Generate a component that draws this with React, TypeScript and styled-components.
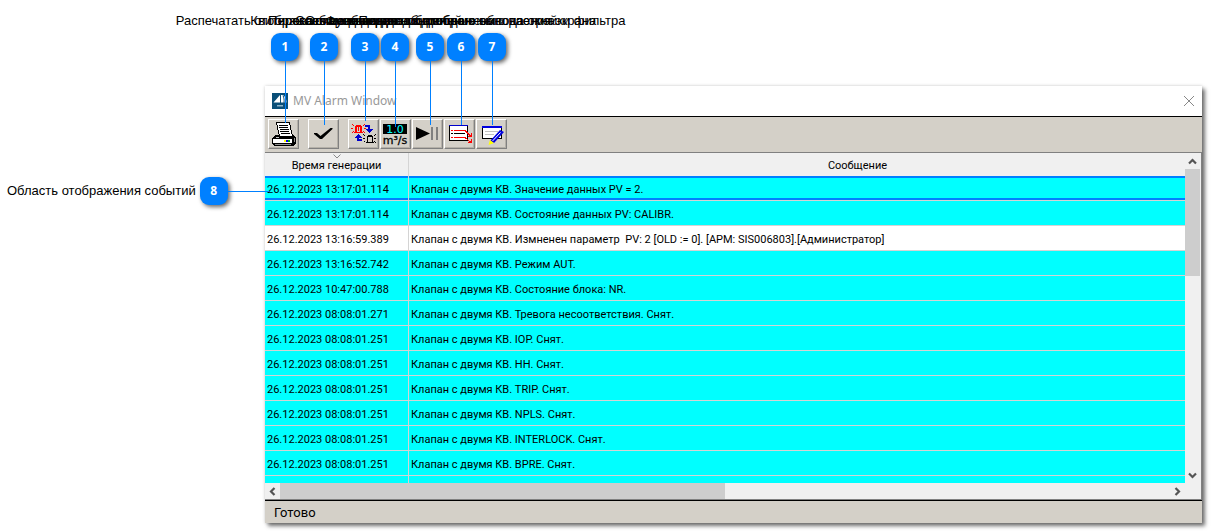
import React from "react";
import styled, { createGlobalStyle, css } from "styled-components";

const UI = `Roboto, "Liberation Sans", sans-serif`;
const CAPTION = `"Noto Sans", "Open Sans", sans-serif`;
const LABEL = `"Liberation Sans", Arial, sans-serif`;
const BLUE = "#0080ff";

const GlobalStyle = createGlobalStyle`
  *, *::before, *::after { box-sizing: border-box; }
  body { margin: 0; background: #fff; color: #000; font-family: ${LABEL}; font-size: 13px; }
  button { margin: 0; padding: 0; font: inherit; color: inherit; }
`;

const Figure = styled.main`
  position: relative;
  padding: 86px 9px 8px 265px;
  overflow: hidden;
`;

const Window = styled.section`
  display: flex;
  flex-direction: column;
  background: #d4d0c8;
  box-shadow: 3px 3px 4px rgba(0, 0, 0, 0.55), 0 0 3px rgba(0, 0, 0, 0.18);
`;

const TitleBar = styled.header`
  display: flex;
  align-items: center;
  gap: 5px;
  height: 31px;
  padding: 0 7px;
  background: #fff;
  border-bottom: 1px solid #000;
`;

const Title = styled.h1`
  flex: 1;
  margin: 0;
  font: 400 12px/16px ${CAPTION};
  color: #999;
`;

const CloseButton = styled.button`
  display: flex;
  border: 0;
  background: none;
`;

const Toolbar = styled.div`
  display: flex;
  gap: 9px;
  height: 36px;
  padding: 2px 3px;
  border-bottom: 1px solid #808080;
`;

const ToolGroup = styled.div`
  display: flex;
  gap: 1px;
`;

const ToolButton = styled.button`
  display: flex;
  width: 31px;
  height: 30px;
  border: 1px solid;
  border-color: #fff #808080 #808080 #fff;
  background: #d4d0c8;
  box-shadow: inset -1px -1px 0 #b4b0a8;
`;

const Icon = styled.svg`
  display: block;
  flex: none;
`;

const Viewer = styled.div`
  display: grid;
  grid-template-columns: minmax(0, 1fr) 15px;
  grid-template-rows: 330px 16px;
  padding-right: 1px;
  background: #f0f0f0;
  border-right: 1px solid #808080;
  border-bottom: 1px solid #808080;
`;

const TableArea = styled.div`
  overflow: hidden;
`;

const Table = styled.table`
  width: calc(100% + 122px);
  table-layout: fixed;
  border-collapse: separate;
  border-spacing: 0;
  font: 400 11px/14px ${UI};
`;

const HeadCell = styled.th<{ $width?: string }>`
  position: relative;
  width: ${(p) => p.$width ?? "auto"};
  height: 23px;
  padding: 2px 0 0;
  font-weight: 400;
  background: #f0f0f0;
  border-right: 1px solid #d4d4d4;
`;

const SortMark = styled(Icon)`
  position: absolute;
  top: 1px;
  left: 50%;
  transform: translateX(-50%);
`;

const Cell = styled.td`
  height: 25px;
  padding: 3px 0 0 2px;
  white-space: pre;
  border-right: 1px solid #d4d4d4;
  border-bottom: 1px solid #d4d4d4;
`;

const Row = styled.tr<{ $plain?: boolean; $selected?: boolean }>`
  background: ${(p) => (p.$plain ? "#fff" : "#00ffff")};
  ${(p) =>
    p.$selected &&
    css`
      ${Cell} {
        box-shadow: inset 0 2px 0 ${BLUE}, inset 0 -2px 0 ${BLUE};
      }
    `}
`;

const ScrollBar = styled.div<{ $vertical?: boolean }>`
  display: flex;
  flex-direction: ${(p) => (p.$vertical ? "column" : "row")};
  background: #f0f0f0;
`;

const ScrollTrack = styled.div<{ $vertical?: boolean }>`
  display: flex;
  flex: 1;
  flex-direction: ${(p) => (p.$vertical ? "column" : "row")};
`;

const ScrollThumb = styled.div<{ $share: string }>`
  flex: 0 0 ${(p) => p.$share};
  background: #cdcdcd;
`;

const ScrollButton = styled.button`
  display: flex;
  align-items: center;
  justify-content: center;
  flex: none;
  width: 15px;
  height: 16px;
  border: 0;
  background: #f0f0f0;
`;

const StatusBar = styled.footer`
  height: 23px;
  padding: 3px 9px;
  border-top: 1px solid #000;
  font: 400 13px/18px ${UI};
`;

const Callout = styled.div<{ $x: number; $y: number; $side?: boolean }>`
  position: absolute;
  left: ${(p) => p.$x}px;
  top: ${(p) => p.$y}px;
  display: flex;
  flex-direction: ${(p) => (p.$side ? "row" : "column")};
  align-items: center;
  width: ${(p) => (p.$side ? "auto" : "28px")};
`;

const CalloutLabel = styled.span`
  flex: none;
  font: 400 13px/16px ${LABEL};
  white-space: nowrap;
`;

const Badge = styled.span<{ $side?: boolean }>`
  display: flex;
  flex: none;
  align-items: center;
  justify-content: center;
  width: 28px;
  height: 28px;
  margin: ${(p) => (p.$side ? "0 0 0 4px" : "4px 0 0")};
  border-radius: 9px;
  background: ${BLUE};
  box-shadow: 2px 2px 4px rgba(0, 0, 0, 0.6);
  color: #fff;
  font: 700 12px/16px ${CAPTION};
`;

const Leader = styled.span<{ $length: number; $side?: boolean }>`
  flex: none;
  width: ${(p) => (p.$side ? p.$length : 1)}px;
  height: ${(p) => (p.$side ? 1 : p.$length)}px;
  background: ${BLUE};
`;

const AppIcon = () => (
  <Icon width="16" height="16" viewBox="0 0 16 16" aria-hidden="true">
    <path fill="#0a4f78" d="M0 0h16v16H0z" />
    <path fill="#fff" d="M1.500 9.500 8 2v7.500zM9 2h2c2 1.500 3.500 4 3.500 7.500H9z" />
    <path d="M11 2.500c1 2 1.300 4.500 1 7.500" stroke="#0a4f78" fill="none" />
    <path fill="#8fb4c8" d="M5 12h6v1.500H5z" />
  </Icon>
);

const PrintIcon = () => (
  <Icon width="29" height="28" viewBox="1 1 29 28" shapeRendering="crispEdges" aria-hidden="true">
    <path d="M8 16h17l3 3v6l-3 2H6l-2-2v-6z" fill="#000" />
    <path d="M8.500 3.500h13l3 14h-13z" fill="#fff" stroke="#000" />
    <path d="M11 6.500h9M11 8.500h9M12 10.500h9M12 12.500h9M13 14.500h9" stroke="#000" />
    <path d="M5 20h19v4H5z" fill="#fff" />
    <path d="M8 18h3v1H7z" fill="#c0c0c0" />
    <path d="M26 19h1v4h-1zM7 25h16v1H7z" fill="#909090" />
    <path d="M16 21h2v2h-2z" fill="#ff0" />
    <path d="M18 21h2v2h-2z" fill="#00f" />
    <path d="M20 21h2v2h-2z" fill="#0a0" />
  </Icon>
);

const AcknowledgeIcon = () => (
  <Icon width="29" height="28" viewBox="1 1 29 28" aria-hidden="true">
    <path d="M6 14h3l3.500 3L22.500 9h2v1L14 20h-2l-6-5z" fill="#000" />
  </Icon>
);

const SwitchIcon = () => (
  <Icon width="29" height="28" viewBox="1 1 29 28" shapeRendering="crispEdges" fill="none" aria-hidden="true">
    <path d="M7 7h1V6h5v1h1v6h1v1H6v-1h1z" fill="#f00" />
    <path d="M9 8h3v5H9z" fill="#d4d0c8" />
    <path d="M10 8h1v4h-1z" fill="#f00" />
    <path d="M4 5h1v1H4zM5 6h1v1H5zM3 9h2v1H3zM5 12h1v1H5zM4 13h1v1H4zM16 5h1v1h-1zM15 6h1v1h-1zM16 9h2v1h-2zM15 12h1v1h-1zM16 13h1v1h-1z" fill="#f00" />
    <path d="M17 6h5v4h3l-4 4-4-4h3V8h-3z" fill="#00c" />
    <path d="M14 22H9v-3H6l4-4 4 4h-3v1h3z" fill="#00c" />
    <path d="M19 17h1v-1h4v1h1v6h1v1h-8v-1h1z" fill="#000" />
    <path d="M20 18h4v5h-4z" fill="#d4d0c8" />
    <path d="M15 15h1v1h-1zM16 16h1v1h-1zM15 19h2v1h-2zM16 22h1v1h-1zM27 15h1v1h-1zM26 16h1v1h-1zM26 19h2v1h-2zM26 22h1v1h-1zM27 23h1v1h-1z" fill="#000" />
  </Icon>
);

const UnitsIcon = () => (
  <Icon width="29" height="28" viewBox="1 1 29 28" aria-hidden="true">
    <path d="M3 5h24v10H3z" fill="#000" />
    <text x="15" y="14" textAnchor="middle" fill="#0ff" fontFamily="DejaVu Sans, sans-serif" fontSize="11">1.0</text>
    <text x="15" y="25" textAnchor="middle" fill="#000" stroke="#000" strokeWidth="0.3" fontFamily="DejaVu Sans, sans-serif" fontSize="11">m³/s</text>
  </Icon>
);

const PauseIcon = () => (
  <Icon width="29" height="28" viewBox="1 1 29 28" aria-hidden="true">
    <path d="M4 8l14 6.500L4 21z" fill="#000" />
    <path d="M19 8h2v13h-2zM24 8h2v13h-2z" fill="#808080" />
  </Icon>
);

const DetailIcon = () => (
  <Icon width="29" height="28" viewBox="1 1 29 28" shapeRendering="crispEdges" fill="none" aria-hidden="true">
    <path d="M5.500 6.500h18v15h-18z" fill="#fff" stroke="#000" />
    <path d="M5 6h19v1H5z" fill="#00c" />
    <path d="M7 11h2v1H7zM10 11h11v1H10zM7 18h2v1H7zM10 18h11v1H10z" fill="#f00" />
    <path d="M21 11.500l6 6M21 18.500l6 5" stroke="#f00" />
    <path d="M27 14h1v4h-4v-1h3zM27 20h1v4h-4v-1h3z" fill="#f00" />
    <path d="M7 14h2v1H7zM10 14h11v1H10z" fill="#000" />
  </Icon>
);

const FilterIcon = () => (
  <Icon width="29" height="28" viewBox="1 1 29 28" aria-hidden="true">
    <path d="M6.500 8.500h19v11h-19z" fill="#fff" stroke="#000" shapeRendering="crispEdges" />
    <path d="M6 8h20" stroke="#0000e0" strokeWidth="2" shapeRendering="crispEdges" />
    <path d="M9 12.500h13M9 15.500h9" stroke="#c0c0c0" shapeRendering="crispEdges" />
    <path d="M24 11l4 2-10 11-4-2z" fill="#0000e0" />
    <path d="M24.500 13.500l-8 8.500" stroke="#fff" />
    <path d="M14 21l4 3-5.500 2z" fill="#ff0" />
  </Icon>
);

const arrows = {
  up: "M1 6.500 4.500 3 8 6.500",
  down: "M1 2.500 4.500 6 8 2.500",
  left: "M6.500 1 3 4.500 6.500 8",
  right: "M2.500 1 6 4.500 2.500 8",
};

const Arrow = ({ to }: { to: keyof typeof arrows }) => (
  <Icon width="9" height="9" viewBox="0 0 9 9" fill="none" aria-hidden="true">
    <path d={arrows[to]} stroke="#555" strokeWidth="2.200" />
  </Icon>
);

const toolGroups = [
  [{ name: "Печать", icon: <PrintIcon /> }],
  [{ name: "Квитировать", icon: <AcknowledgeIcon /> }],
  [
    { name: "Переключение", icon: <SwitchIcon /> },
    { name: "Единицы", icon: <UnitsIcon /> },
    { name: "Пауза", icon: <PauseIcon /> },
    { name: "Подробно", icon: <DetailIcon /> },
    { name: "Фильтр", icon: <FilterIcon /> },
  ],
];

const events = [
  { time: "26.12.2023 13:17:01.114", text: "Значение данных PV = 2.", selected: true },
  { time: "26.12.2023 13:17:01.114", text: "Состояние данных PV: CALIBR." },
  {
    time: "26.12.2023 13:16:59.389",
    text: "Измненен параметр  PV: 2 [OLD := 0]. [АРМ: SIS006803].[Администратор]",
    plain: true,
  },
  { time: "26.12.2023 13:16:52.742", text: "Режим AUT." },
  { time: "26.12.2023 10:47:00.788", text: "Состояние блока: NR." },
  { time: "26.12.2023 08:08:01.271", text: "Тревога несоответствия. Снят." },
  { time: "26.12.2023 08:08:01.251", text: "IOP. Снят." },
  { time: "26.12.2023 08:08:01.251", text: "HH. Снят." },
  { time: "26.12.2023 08:08:01.251", text: "TRIP. Снят." },
  { time: "26.12.2023 08:08:01.251", text: "NPLS. Снят." },
  { time: "26.12.2023 08:08:01.251", text: "INTERLOCK. Снят." },
  { time: "26.12.2023 08:08:01.251", text: "BPRE. Снят." },
];

const callouts = [
  { x: 271, length: 62, label: "Распечатать отображаемые данные" },
  { x: 310, length: 64, label: "Квитировать сообщения" },
  { x: 351, length: 60, label: "Переключение вида сообщений" },
  { x: 381, length: 66, label: "Сообщения с единицами данных" },
  { x: 416, length: 64, label: "Остановка и возобновление вывода окна" },
  { x: 447, length: 64, label: "Функция для подробного обновления экрана" },
  { x: 478, length: 64, label: "Переход к отображению настройки фильтра" },
];

export default function App() {
  return (
    <Figure>
      <GlobalStyle />
      <Window aria-label="MV Alarm Window">
        <TitleBar>
          <AppIcon />
          <Title>MV Alarm Window</Title>
          <CloseButton aria-label="Закрыть">
            <Icon width="12" height="12" viewBox="0 0 12 12" aria-hidden="true">
              <path d="M1 1l10 10M11 1L1 11" stroke="#888" />
            </Icon>
          </CloseButton>
        </TitleBar>
        <Toolbar role="toolbar">
          {toolGroups.map((group, i) => (
            <ToolGroup key={i}>
              {group.map((tool) => (
                <ToolButton key={tool.name} aria-label={tool.name}>
                  {tool.icon}
                </ToolButton>
              ))}
            </ToolGroup>
          ))}
        </Toolbar>
        <Viewer>
          <TableArea>
            <Table>
              <thead>
                <tr>
                  <HeadCell $width="144px">
                    <SortMark width="9" height="5" viewBox="0 0 9 5" fill="none" aria-hidden="true">
                      <path d="M1 .5l3.500 3.500L8 .5" stroke="#888" />
                    </SortMark>
                    Время генерации
                  </HeadCell>
                  <HeadCell>Сообщение</HeadCell>
                </tr>
              </thead>
              <tbody>
                {events.map((event, i) => (
                  <Row key={i} $plain={event.plain} $selected={event.selected}>
                    <Cell>{event.time}</Cell>
                    <Cell>{`Клапан с двумя КВ. ${event.text}`}</Cell>
                  </Row>
                ))}
                <Row>
                  <Cell />
                  <Cell />
                </Row>
              </tbody>
            </Table>
          </TableArea>
          <ScrollBar $vertical>
            <ScrollButton aria-label="Вверх"><Arrow to="up" /></ScrollButton>
            <ScrollTrack $vertical>
              <ScrollThumb $share="36%" />
            </ScrollTrack>
            <ScrollButton aria-label="Вниз"><Arrow to="down" /></ScrollButton>
          </ScrollBar>
          <ScrollBar>
            <ScrollButton aria-label="Влево"><Arrow to="left" /></ScrollButton>
            <ScrollTrack>
              <ScrollThumb $share="50%" />
            </ScrollTrack>
            <ScrollButton aria-label="Вправо"><Arrow to="right" /></ScrollButton>
          </ScrollBar>
        </Viewer>
        <StatusBar>Готово</StatusBar>
      </Window>
      {callouts.map((callout, i) => (
        <Callout key={callout.x} $x={callout.x} $y={13}>
          <CalloutLabel>{callout.label}</CalloutLabel>
          <Badge>{i + 1}</Badge>
          <Leader $length={callout.length} />
        </Callout>
      ))}
      <Callout $x={7} $y={177} $side>
        <CalloutLabel>Область отображения событий</CalloutLabel>
        <Badge $side>8</Badge>
        <Leader $side $length={41} />
      </Callout>
    </Figure>
  );
}
